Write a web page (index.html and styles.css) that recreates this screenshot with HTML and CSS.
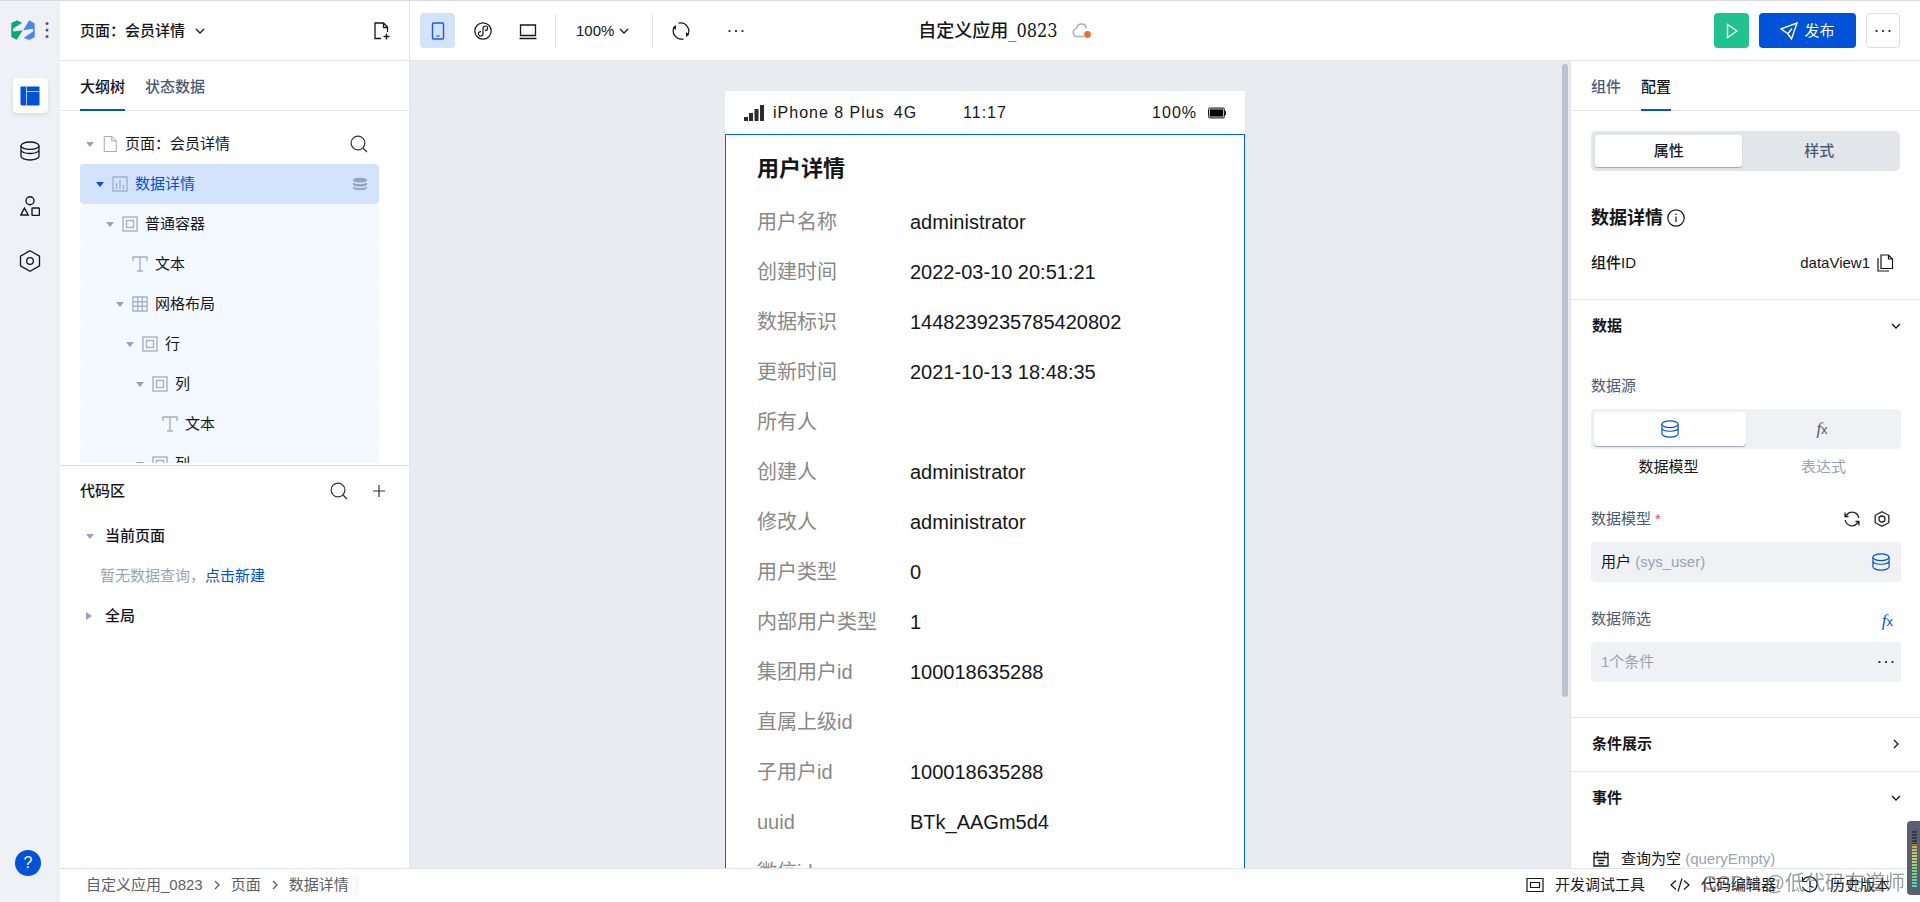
FILE: index.html
```html
<!DOCTYPE html>
<html lang="zh-CN">
<head>
<meta charset="utf-8">
<title>自定义应用_0823</title>
<link rel="stylesheet" href="styles.css">
</head>
<body>
<svg class="defs" aria-hidden="true">
  <symbol id="i-db" viewBox="0 0 20 20"><g fill="none" stroke="currentColor" stroke-width="1.3"><ellipse cx="10" cy="4.700" rx="9" ry="3.700"/><path d="M1 4.700v10.600c0 2 4 3.700 9 3.700s9-1.700 9-3.700V4.700M1 9c0 2 4 3.500 9 3.500s9-1.500 9-3.500"/></g></symbol>
  <symbol id="i-search" viewBox="0 0 18 18"><g fill="none" stroke="currentColor" stroke-width="1.200"><circle cx="8" cy="8" r="6.900"/><path d="M13 13l4 4"/></g></symbol>
  <symbol id="i-down" viewBox="0 0 10 10"><path d="M1 3l4 4 4-4" fill="none" stroke="currentColor" stroke-width="1.300"/></symbol>
  <symbol id="i-right" viewBox="0 0 10 10"><path d="M3 1l4 4-4 4" fill="none" stroke="currentColor" stroke-width="1.300"/></symbol>
  <symbol id="i-dots" viewBox="0 0 16 16"><g fill="currentColor"><circle cx="1.500" cy="8" r="1.100"/><circle cx="8" cy="8" r="1.100"/><circle cx="14.500" cy="8" r="1.100"/></g></symbol>
  <symbol id="i-box" viewBox="0 0 16 16"><g fill="none" stroke="currentColor" stroke-width="1.400"><rect x="1" y="1" width="14" height="14"/><rect x="4.500" y="4.500" width="7" height="7"/></g></symbol>
  <symbol id="i-text" viewBox="0 0 16 16"><path d="M1 5V1h14v4M8 1v14M5 15h6" fill="none" stroke="currentColor" stroke-width="1.400"/></symbol>
  <symbol id="i-grid" viewBox="0 0 16 16"><path d="M1 1h14v14H1zM1 5.700h14M1 10.300h14M5.700 1v14M10.300 1v14" fill="none" stroke="currentColor" stroke-width="1.400"/></symbol>
  <symbol id="i-chart" viewBox="0 0 16 16"><path d="M1 1h14v14H1zM4.500 7v6M8 4v9M11.500 9v4" fill="none" stroke="currentColor" stroke-width="1.400"/></symbol>
  <symbol id="i-hex" viewBox="0 0 22 22"><g fill="none" stroke="currentColor" stroke-width="1.300"><path d="M11 .8l9.500 5.300v9.800L11 21.200 1.500 15.900V6.100z"/><circle cx="11" cy="11" r="3.300"/></g></symbol>
  <symbol id="i-nut" viewBox="0 0 16 16"><g fill="none" stroke="currentColor" stroke-width="1.300"><path d="M8 .7l6.800 3.600v7.400L8 15.300 1.200 11.700V4.300z"/><circle cx="8" cy="8" r="3"/></g></symbol>
</svg>

<div class="app">
  <nav class="rail" aria-label="主导航">
    <div class="brand">
      <svg class="logo" viewBox="36 56 69 59"><path d="M36 65L53 57l15 7-26 17-2 5 3 4 27-4-18 28-16-8z" fill="#09a974"/><path d="M105 107l-17 8-15-7 26-17 2-5-3-4-27 4 18-29 16 9z" fill="#4687f3"/></svg>
      <svg class="brand-dots" viewBox="0 0 4 18"><g fill="#4d5a76"><circle cx="2" cy="2.500" r="1.500"/><circle cx="2" cy="9" r="1.500"/><circle cx="2" cy="15.500" r="1.500"/></g></svg>
    </div>
    <button class="rail-btn on" aria-label="页面"><svg class="s20" viewBox="0 0 20 20"><path d="M1.500 .5H19.500v19H2A1.500 1.500 0 0 1 .5 18V.5z" fill="#0052d9"/><path d="M6.500 .5v19M6.500 5.500h13" stroke="#b4cdf6" stroke-width="1"/></svg></button>
    <button class="rail-btn" aria-label="数据"><svg class="s20"><use href="#i-db"/></svg></button>
    <button class="rail-btn" aria-label="素材"><svg class="s20" viewBox="0 0 20 20"><g fill="none" stroke="currentColor" stroke-width="1.400"><circle cx="10" cy="4.700" r="4"/><path d="M4.500 12.200L.8 19h7.400z"/><rect x="12" y="12" width="7.400" height="7.400" rx=".8"/></g></svg></button>
    <button class="rail-btn" aria-label="设置"><svg class="s22"><use href="#i-hex"/></svg></button>
    <button class="help" aria-label="帮助">?</button>
  </nav>

  <div class="main">
    <header class="topbar">
      <div class="top-left">
        <div class="page-pick">
          <button class="plain page-name">页面：会员详情 <svg class="s10"><use href="#i-down"/></svg></button>
          <button class="plain" aria-label="新建页面"><svg class="s18" viewBox="0 0 18 18"><path d="M8 16.500H2V1h8.500l4 4v5M10.500 1v4.500h4M13.500 11.500v6M10.500 14.500h6" fill="none" stroke="currentColor" stroke-width="1.300"/></svg></button>
        </div>
        <div class="tools">
          <button class="tool on" aria-label="手机"><svg class="s18" viewBox="0 0 18 18"><rect x="3.500" y="1" width="11" height="16" rx="1" fill="none" stroke="#1a5ae6" stroke-width="1.400"/><path d="M7.500 14h3" stroke="#1a5ae6" stroke-width="1.200"/></svg></button>
          <button class="tool" aria-label="小程序"><svg class="s18" viewBox="0 0 18 18"><g fill="none" stroke="currentColor" stroke-width="1.200"><circle cx="9" cy="9" r="8.200"/><path d="M11 8.700c1.700-.3 2.600-1.200 2.600-2.300A2.200 2.200 0 0 0 11.300 4C10 4 9 5 9 6.200v5.600c0 1.200-1 2.200-2.300 2.200a2.200 2.200 0 0 1-2.300-2.400c0-1.100.9-2 2.600-2.300"/></g></svg></button>
          <button class="tool" aria-label="电脑"><svg class="s18" viewBox="0 0 18 18"><path d="M1.500 3H16.500V13.500H1.500zM.5 16.500h17" fill="none" stroke="currentColor" stroke-width="1.300"/></svg></button>
          <span class="sep"></span>
          <button class="plain zoom">100% <svg class="s10"><use href="#i-down"/></svg></button>
          <span class="sep"></span>
          <button class="tool" aria-label="刷新"><svg class="s18" viewBox="0 0 18 18"><g fill="none" stroke="currentColor" stroke-width="1.200"><path d="M6.500 1.200A8.200 8.200 0 0 1 15.500 13.500M11.500 16.800A8.200 8.200 0 0 1 2.500 4.500"/></g><path d="M14 10v5l3-2.500zM4 8V3L1 5.500z" fill="currentColor"/></svg></button>
          <button class="tool" aria-label="更多工具"><svg class="s16"><use href="#i-dots"/></svg></button>
        </div>
      </div>
      <h1 class="app-title">自定义应用_0823 <svg class="cloud" viewBox="0 0 20 16"><path d="M12 13.500H5a4 4 0 0 1-.7-7.900C5 2.900 7 1 9.500 1s4.600 1.900 5 4.500" fill="none" stroke="#a5b0c5" stroke-width="1.400"/><circle cx="15.500" cy="11.500" r="3.400" fill="#ed6e33"/></svg></h1>
      <div class="actions">
        <button class="btn play" aria-label="预览"><svg class="s16" viewBox="0 0 16 16"><path d="M3.500 1.500L13 8l-9.500 6.500z" fill="none" stroke="#fff" stroke-width="1.400"/></svg></button>
        <button class="btn publish"><svg class="s18" viewBox="0 0 18 18"><path d="M1 6.800L17 1l-5.500 16-3.700-5.200zM7.800 11.800L12 6.500" fill="none" stroke="#fff" stroke-width="1.400"/></svg>发布</button>
        <button class="btn more" aria-label="更多"><svg class="s16"><use href="#i-dots"/></svg></button>
      </div>
    </header>

    <div class="work">
      <aside class="side">
        <div class="tabs"><button class="tab on">大纲树</button><button class="tab">状态数据</button></div>
        <div class="tree-wrap">
          <ul class="tree">
            <li class="node root"><i class="tri"></i><svg class="s16 gray" viewBox="0 0 16 18"><path d="M1.500 .5H10l5 5V17.500H1.500zM10 .5v5h5" fill="none" stroke="currentColor"/></svg><span>页面：会员详情</span><button class="plain tail" aria-label="搜索"><svg class="s18"><use href="#i-search"/></svg></button></li>
            <li class="node picked l1"><i class="tri"></i><svg class="s16"><use href="#i-chart"/></svg><span>数据详情</span><svg class="s14 tail" viewBox="0 0 14 14"><path d="M0 3.200c0-1.500 3-2.400 7-2.400s7 .9 7 2.400-3 2.200-7 2.200S0 4.700 0 3.200zM0 5.500c3 2 11 2 14 0v1.800C14 9 11 9.600 7 9.600S0 9 0 7.300zM0 9.500c3 2 11 2 14 0v1.300c0 1.600-3 2.400-7 2.400S0 12.400 0 10.800z" fill="#94a4bf"/></svg></li>
            <li class="node l2"><i class="tri"></i><svg class="s16"><use href="#i-box"/></svg><span>普通容器</span></li>
            <li class="node l3"><i class="tri none"></i><svg class="s16"><use href="#i-text"/></svg><span>文本</span></li>
            <li class="node l3"><i class="tri"></i><svg class="s16"><use href="#i-grid"/></svg><span>网格布局</span></li>
            <li class="node l4"><i class="tri"></i><svg class="s16"><use href="#i-box"/></svg><span>行</span></li>
            <li class="node l5"><i class="tri"></i><svg class="s16"><use href="#i-box"/></svg><span>列</span></li>
            <li class="node l6"><i class="tri none"></i><svg class="s16"><use href="#i-text"/></svg><span>文本</span></li>
            <li class="node l5"><i class="tri"></i><svg class="s16"><use href="#i-box"/></svg><span>列</span></li>
          </ul>
        </div>
        <section class="code">
          <div class="code-head"><h2>代码区</h2><button class="plain" aria-label="搜索代码"><svg class="s18"><use href="#i-search"/></svg></button><button class="plain" aria-label="新建"><svg class="s12" viewBox="0 0 12 12"><path d="M6 0v12M0 6h12" stroke="currentColor" stroke-width="1.200"/></svg></button></div>
          <div class="code-row"><i class="tri small"></i><b>当前页面</b></div>
          <p class="code-empty">暂无数据查询，<a href="#new">点击新建</a></p>
          <div class="code-row"><i class="tri small side-tri"></i><b>全局</b></div>
        </section>
      </aside>

      <main class="canvas">
        <div class="phone">
          <div class="status">
            <div class="carrier"><svg class="signal" viewBox="0 0 20 16"><path d="M0 12h4v4H0zM5 8h4v8H5zM10.500 4h4v12h-4zM16 0h4v16h-4z" fill="#2b2b2b"/></svg><span>iPhone 8 Plus</span><span>4G</span></div>
            <span>11:17</span>
            <div class="battery"><span>100%</span><svg class="s18" viewBox="0 0 18 18"><rect x=".5" y="4" width="16" height="10" rx="1.500" fill="#bbb" stroke="#222"/><path d="M2 5.500h13v7H2z" fill="#000"/><rect x="16.500" y="7" width="1.500" height="4" fill="#222"/></svg></div>
          </div>
          <div class="view">
            <h2>用户详情</h2>
            <dl class="fields">
              <dt>用户名称</dt><dd>administrator</dd>
              <dt>创建时间</dt><dd>2022-03-10 20:51:21</dd>
              <dt>数据标识</dt><dd>1448239235785420802</dd>
              <dt>更新时间</dt><dd>2021-10-13 18:48:35</dd>
              <dt>所有人</dt><dd></dd>
              <dt>创建人</dt><dd>administrator</dd>
              <dt>修改人</dt><dd>administrator</dd>
              <dt>用户类型</dt><dd>0</dd>
              <dt>内部用户类型</dt><dd>1</dd>
              <dt>集团用户id</dt><dd>100018635288</dd>
              <dt>直属上级id</dt><dd></dd>
              <dt>子用户id</dt><dd>100018635288</dd>
              <dt>uuid</dt><dd>BTk_AAGm5d4</dd>
              <dt>微信id</dt><dd></dd>
            </dl>
          </div>
        </div>
        <div class="scroll"><div class="thumb"></div></div>
      </main>

      <aside class="props">
        <div class="tabs"><button class="tab">组件</button><button class="tab on">配置</button></div>
        <div class="intro">
          <div class="seg"><button class="on">属性</button><button>样式</button></div>
          <h2>数据详情<svg class="s18" viewBox="0 0 18 18"><g fill="none" stroke="currentColor" stroke-width="1.200"><circle cx="9" cy="9" r="8.200"/><path d="M9 7.500V13M9 4.500V6"/></g></svg></h2>
          <div class="idrow"><b>组件ID</b><span>dataView1</span><svg class="s18" viewBox="0 0 18 18"><path d="M5 1h7.500L16.500 5v9.500H5zM12.500 1v4h4M2 4v13h11" fill="none" stroke="currentColor" stroke-width="1.200"/></svg></div>
        </div>
        <section class="group">
          <button class="group-head">数据<svg class="s10"><use href="#i-down"/></svg></button>
          <div class="group-body">
            <div class="label">数据源</div>
            <div class="source">
              <button class="on" aria-labelledby="src-model"><svg class="s18"><use href="#i-db"/></svg></button>
              <button aria-labelledby="src-expr"><span class="fx">f<small>x</small></span></button>
            </div>
            <div class="source-names"><span id="src-model">数据模型</span><span id="src-expr" class="mute">表达式</span></div>
            <div class="label model-label">数据模型<em>*</em>
              <span class="label-tools"><svg class="s16" viewBox="0 0 16 16"><path d="M14.800 7A6.900 6.900 0 0 0 2.500 4L1.500 5.500M1 1.500V5.500h3.500M1.200 9a6.900 6.900 0 0 0 12.300 3L14.500 10.500M15 14.500V10.500h-3.500" fill="none" stroke="currentColor" stroke-width="1.300"/></svg><svg class="s16"><use href="#i-nut"/></svg></span>
            </div>
            <button class="field"><span>用户 <span class="mute">(sys_user)</span></span><svg class="s18 blue"><use href="#i-db"/></svg></button>
            <div class="label filter-label">数据筛选<span class="fx blue">f<small>x</small></span></div>
            <button class="field dots"><span class="mute">1个条件</span><svg class="s16"><use href="#i-dots"/></svg></button>
          </div>
        </section>
        <section class="group"><button class="group-head">条件展示<svg class="s10"><use href="#i-right"/></svg></button></section>
        <section class="group">
          <button class="group-head">事件<svg class="s10"><use href="#i-down"/></svg></button>
          <div class="event"><svg class="s16" viewBox="0 0 16 16"><path d="M1 2.500h14V15H1zM1 6.500h14M4.500 0v4.500M11.500 0v4.500M4.500 9.500h7M5.500 12.500h5" fill="none" stroke="currentColor" stroke-width="1.300"/></svg><span>查询为空 <span class="mute">(queryEmpty)</span></span></div>
        </section>
      </aside>
    </div>

    <footer class="foot">
      <nav class="crumbs" aria-label="路径"><a href="#app">自定义应用_0823</a><svg class="s10"><use href="#i-right"/></svg><a href="#pages">页面</a><svg class="s10"><use href="#i-right"/></svg><a href="#detail" class="last">数据详情</a></nav>
      <div class="foot-tools">
        <button class="plain"><svg class="s18" viewBox="0 0 18 18"><path d="M1 2.500h16v13H1zM4.500 6.500h9v5h-9z" fill="none" stroke="currentColor" stroke-width="1.200"/></svg>开发调试工具</button>
        <button class="plain"><svg class="s20" viewBox="0 0 20 18"><path d="M6 4.500L1 9l5 4.500M14 4.500L19 9l-5 4.500M12 2.500L8 15.500" fill="none" stroke="currentColor" stroke-width="1.200"/></svg>代码编辑器</button>
        <button class="plain"><svg class="s18" viewBox="0 0 18 18"><path d="M2 4.500A7.500 7.500 0 1 1 1.500 11M1.500 1v4.500H6M9 5v5l3.500 1.500" fill="none" stroke="currentColor" stroke-width="1.200"/></svg>历史版本</button>
      </div>
    </footer>
  </div>
</div>
<div class="watermark">CSDN @低代码布道师</div>
<div class="meter"><div class="meter-bars"></div></div>
</body>
</html>
```
FILE: styles.css
```css
* { box-sizing: border-box; }
body {
  margin: 0;
  font: 15px/20px "Liberation Sans", "Noto Sans CJK SC", sans-serif;
  color: #14161a;
  background: #fff;
}
h1, h2, p, ul, dl, dd { margin: 0; padding: 0; }
button { font: inherit; color: inherit; border: 0; padding: 0; background: none; cursor: pointer; }
b { font-weight: 500; }
a { text-decoration: none; color: inherit; }
svg { flex: none; display: block; }
.defs { display: none; }
.s10 { width: 10px; height: 10px; }
.s12 { width: 12px; height: 12px; }
.s14 { width: 14px; height: 14px; }
.s16 { width: 16px; height: 16px; }
.s18 { width: 18px; height: 18px; }
.s20 { width: 20px; height: 20px; }
.s22 { width: 22px; height: 22px; }
.plain { display: flex; align-items: center; }
.blue { color: #0052d9; }
.mute { color: #97a3b7; }

.app { display: flex; height: 100vh; border-top: 1px solid #d9dadd; }

/* icon rail */
.rail {
  flex: none;
  width: 60px;
  background: #eff1f6;
  display: flex;
  flex-direction: column;
  align-items: center;
  gap: 20px;
  padding-bottom: 26px;
}
.brand { display: flex; align-items: center; gap: 10px; height: 57px; }
.logo { width: 24px; height: 20px; }
.brand-dots { width: 4px; height: 18px; }
.rail-btn { width: 35px; height: 35px; display: grid; place-items: center; border-radius: 4px; }
.rail-btn.on { background: #fff; box-shadow: 0 2px 5px #0000001a; }
.help { margin-top: auto; margin-right: 4px; width: 26px; height: 26px; border-radius: 50%; background: #0052d9; color: #fff; font-size: 16px; }

.main { flex: 1; min-width: 0; display: flex; flex-direction: column; }

/* top bar */
.topbar {
  flex: none;
  height: 60px;
  display: grid;
  grid-template-columns: 1fr auto 1fr;
  align-items: center;
  border-bottom: 1px solid #e3e5ea;
}
.top-left { display: flex; height: 100%; }
.page-pick {
  width: 350px;
  display: flex;
  align-items: center;
  justify-content: space-between;
  padding: 0 18px 0 20px;
  border-right: 1px solid #e3e5ea;
}
.page-name { gap: 10px; font-weight: 500; }
.tools { display: flex; align-items: center; gap: 10px; padding-left: 10px; }
.tool { width: 35px; height: 35px; display: grid; place-items: center; border-radius: 4px; }
.tool.on { background: #d4e3fc; }
.sep { width: 1px; height: 34px; background: #e0e3e8; }
.zoom { gap: 5px; padding: 0 13px 0 10px; }
.tools .tool:last-child { margin-left: 10px; }
.app-title {
  display: flex;
  align-items: center;
  gap: 14px;
  padding-left: 30px;
  font: 500 18px/24px "DejaVu Serif Condensed", "Noto Sans CJK SC", serif;
}
.cloud { width: 20px; height: 16px; }
.actions { display: flex; justify-content: flex-end; gap: 10px; padding-right: 20px; }
.btn { height: 35px; border-radius: 4px; display: flex; align-items: center; justify-content: center; gap: 6px; }
.play { width: 35px; background: #20c28f; }
.publish { width: 97px; background: #0052d9; color: #fff; }
.more { width: 34px; border: 1px solid #d9dde6; }

.work { flex: 1; min-height: 0; display: flex; }

/* tabs */
.tabs { height: 50px; display: flex; gap: 20px; padding: 0 20px; border-bottom: 1px solid #e3e5ea; }
.tab { height: 50px; padding-top: 4px; color: #4b5b76; border-bottom: 2px solid transparent; font-weight: 500; }
.tab.on { color: #14161a; border-color: #0052d9; }

/* outline */
.side {
  flex: none;
  width: 350px;
  display: grid;
  grid-template-rows: auto minmax(0, 355fr) minmax(0, 402fr);
  border-right: 1px solid #e3e5ea;
}
.tree-wrap { overflow: hidden; padding: 13px 30px 2px 20px; border-bottom: 1px solid #d5dae4; }
.tree { list-style: none; height: 100%; overflow: hidden; }
.node { height: 40px; display: flex; align-items: center; padding: 0 12px 0 6px; border-radius: 4px; background: #f4f8ff; }
.node svg { color: #a3b1c9; }
.node > span { margin-left: 7px; }
.node.root { background: none; padding-right: 11px; }
.node.root svg { color: #999; }
.node.root .tail svg { color: #333; }
.node.picked { background: #d4e3fc; color: #0052d9; }
.node.picked .tri { border-top-color: #0052d9; }
.tail { margin-left: auto; }
.l1 { padding-left: 16px; }
.l2 { padding-left: 26px; }
.l3 { padding-left: 36px; }
.l4 { padding-left: 46px; }
.l5 { padding-left: 56px; }
.l6 { padding-left: 66px; }
.tri { flex: none; width: 8px; margin-right: 8px; border: 4px solid transparent; border-top: 5px solid #94a4bf; border-bottom: 0; }
.tri.none { visibility: hidden; }
.tri.small { margin: 0 11px 0 6px; }
.tri.side-tri { border: 4px solid transparent; border-left: 6px solid #94a4bf; border-right: 0; }

.code { padding: 0 20px; }
.code-head { display: flex; align-items: center; height: 50px; gap: 25px; padding-right: 4px; color: #333; }
.code-head h2 { flex: 1; font-size: 15px; font-weight: 500; color: #14161a; }
.code-row { display: flex; align-items: center; height: 40px; }
.code-row b { font-weight: 500; }
.code-empty { padding-left: 20px; line-height: 40px; color: #97a3b7; }
.code-empty a { color: #0052d9; }

/* canvas */
.canvas { flex: 1; min-width: 0; position: relative; display: flex; justify-content: center; overflow: hidden; padding: 30px 10px 0 0; background: #eaebf0; }
.phone { width: 520px; height: max-content; background: #fff; }
.status { display: grid; grid-template-columns: 1fr auto 1fr; align-items: center; height: 43px; padding: 0 19px; font-size: 16px; letter-spacing: 1px; }
.carrier { display: flex; align-items: center; gap: 9px; }
.signal { width: 20px; height: 16px; }
.battery { display: flex; align-items: center; justify-content: flex-end; gap: 11px; }
.view { border: 1px solid #0065e8; padding: 18px 31px; }
.view h2 { font-size: 22px; line-height: 32px; font-weight: 700; margin-bottom: 12px; }
.fields { display: grid; grid-template-columns: 153px 1fr; grid-auto-rows: 50px; align-items: center; font-size: 20px; }
.fields dt { color: #888; }
.scroll { position: absolute; inset: 3px 2px 3px auto; width: 6px; }
.thumb { height: 79%; border-radius: 3px; background: #bac3cf; }

/* properties */
.props { flex: none; width: 350px; overflow: hidden; border-left: 1px solid #e3e5ea; }
.intro { padding: 20px 20px 0; border-bottom: 1px solid #e3e5ea; }
.seg { display: flex; height: 40px; padding: 4px; border-radius: 5px; background: #e2e6eb; }
.seg button { flex: 153; border-radius: 3px; color: #4b5b76; font-weight: 500; }
.seg .on { flex: 147; background: #fff; color: #14161a; box-shadow: 0 1px 1px #9aa7b8; }
.intro h2 { display: flex; align-items: center; gap: 4px; height: 46px; margin-top: 24px; font-size: 18px; font-weight: 600; }
.idrow { display: flex; align-items: center; gap: 6px; height: 44px; padding-right: 6px; margin-bottom: 14px; }
.idrow b { flex: 1; }
.group + .group { border-top: 1px solid #e3e5ea; }
.group-head { display: flex; align-items: center; justify-content: space-between; width: 100%; height: 53px; padding: 0 19px 2px 21px; font-weight: 600; }
.group-body { padding: 23px 19px 35px 20px; }
.label { display: flex; align-items: center; height: 20px; color: #4b5b76; }
.label em { margin-left: 4px; color: #e34d59; font-style: normal; }
.label-tools { margin-left: auto; display: flex; gap: 14px; padding-right: 11px; color: #222; }
.source { display: flex; height: 40px; margin-top: 13px; padding: 3px; border-radius: 4px; background: #eff1f5; }
.source button { flex: 1; display: grid; place-items: center; border-radius: 4px; color: #4b5b76; }
.source .on { background: #fff; color: #0052d9; box-shadow: 0 1px 1px #9aa7b8; }
.source-names { display: flex; padding-top: 8px; text-align: center; }
.source-names span { flex: 1; }
.fx { font: italic 17px/16px "Liberation Serif", serif; }
.fx small { font: 13px/16px "Liberation Sans", sans-serif; }
.model-label { margin-top: 32px; }
.field { display: flex; align-items: center; justify-content: space-between; width: 100%; height: 40px; margin-top: 13px; padding: 0 11px 0 10px; border-radius: 4px; background: #eff1f5; }
.field.dots { padding-right: 7px; }
.filter-label { margin-top: 27px; padding-right: 8px; }
.filter-label .fx { margin-left: auto; padding-top: 4px; }
.event { display: flex; align-items: center; gap: 12px; height: 40px; margin-top: 14px; padding-left: 22px; }

/* footer */
.foot { flex: none; height: 34px; display: flex; align-items: center; justify-content: space-between; padding: 0 30px 2px 26px; border-top: 1px solid #e0e3ea; }
.crumbs { display: flex; align-items: center; gap: 9px; color: #5b5e63; }
.last { padding-right: 10px; background: linear-gradient(90deg, #fff 85%, #f5f6f9); }
.foot-tools { display: flex; gap: 25px; }
.foot-tools button { gap: 11px; }

/* overlays */
.watermark { position: fixed; right: 15px; bottom: 4px; font-size: 20px; line-height: 30px; color: #55585d99; pointer-events: none; }
.meter { position: fixed; right: 0; bottom: 7px; width: 13px; height: 74px; padding: 9px 3px 8px 5px; border-radius: 4px 0 0 4px; background: #596070; }
.meter-bars {
  height: 100%;
  background:
    repeating-linear-gradient(#596070 0 1px, transparent 1px 3px),
    linear-gradient(#343944 0 24%, #d6a84e 26%, #c8cf5e 50%, #7fd071 70%, #4bd6c0 100%);
}
```
